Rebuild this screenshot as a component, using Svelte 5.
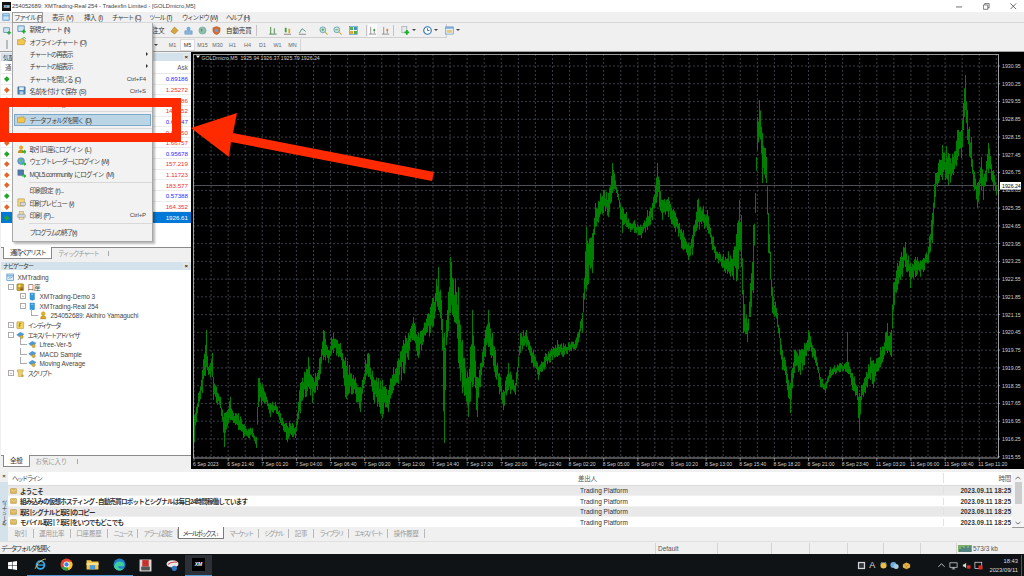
<script>
  // [x, high, low] read off the reference chart
  const keys = [
    [193,416,440],[194,415,442],[198,393,407],[202,370,393],[206,330,367],[208,367,375],[212,353,377],[213,377,400],[220,397,408],[224,413,447],[230,397,420],[233,413,423],[238,413,430],[243,425,438],[252,428,437],[256,437,448],[258,378,407],[265,393,403],[270,403,417],[275,402,410],[280,413,423],[286,423,440],[292,423,437],[295,427,438],[300,383,413],[308,357,387],[312,377,403],[317,373,390],[323,330,360],[328,350,363],[333,333,353],[340,343,357],[345,357,397],[353,375,393],[360,387,412],[365,360,380],[368,353,377],[373,377,400],[382,380,418],[388,390,412],[393,367,390],[403,340,373],[408,333,360],[413,317,340],[418,333,358],[430,307,333],[432,298,327],[438,267,310],[441,300,330],[444,333,443],[446,320,345],[450,257,313],[453,280,317],[458,287,363],[462,340,393],[468,377,417],[472,310,387],[477,377,417],[480,363,387],[488,310,347],[495,350,377],[503,390,410],[508,363,390],[515,383,395],[520,333,353],[526,330,347],[533,350,367],[538,367,380],[545,353,367],[557,340,357],[563,343,357],[575,340,350],[582,313,333],[586,227,290],[592,233,273],[595,203,227],[603,190,213],[608,193,217],[612,163,193],[617,190,197],[622,207,233],[626,212,227],[630,223,232],[634,220,233],[641,227,238],[647,210,230],[652,203,220],[657,163,197],[662,200,220],[668,197,217],[675,213,232],[683,230,250],[688,243,260],[692,235,255],[697,200,228],[707,210,230],[715,247,260],[725,257,273],[733,250,280],[737,223,280],[739,200,250],[741,215,267],[743,290,333],[747,323,342],[750,283,317],[753,225,293],[755,193,213],[757,117,150],[759,100,137],[762,133,183],[766,157,183],[768,213,253],[772,287,313],[777,313,327],[782,350,370],[785,360,375],[790,383,413],[794,350,373],[800,350,375],[808,330,350],[815,350,363],[820,377,387],[825,383,393],[830,367,378],[840,363,372],[846,362,372],[847,332,373],[848,362,374],[852,373,390],[857,387,400],[859,393,432],[861,385,400],[865,377,393],[870,357,380],[873,360,388],[880,347,367],[887,323,353],[891,330,357],[893,283,310],[897,263,290],[900,257,280],[905,242,267],[910,263,288],[915,257,277],[923,258,272],[928,247,263],[932,213,243],[935,173,197],[938,163,183],[942,145,180],[948,153,185],[953,157,175],[957,130,160],[961,130,158],[963,103,130],[965,75,110],[967,110,140],[971,137,167],[973,170,187],[977,183,208],[981,157,190],[983,177,200],[988,143,173],[993,170,190],[997,183,197]
  ];

  // small repeatable noise so the bars look like ticks, not a ribbon
  let seed = 7;
  const rnd = () => (seed = (seed * 16807) % 2147483647) / 2147483647;

  function barsPath() {
    let d = '';
    for (let i = 0; i < keys.length - 1; i++) {
      const [x0, h0, l0] = keys[i];
      const [x1, h1, l1] = keys[i + 1];
      for (let x = x0; x < x1; x += 1) {
        const t = (x - x0) / (x1 - x0);
        const mid = (h0 + (h1 - h0) * t + l0 + (l1 - l0) * t) / 2;
        const half = (l0 + (l1 - l0) * t - h0 - (h1 - h0) * t) / 2;
        const r = rnd();
        const len = x === x0 ? half : half * (0.5 + 0.5 * r * r);
        const off = x === x0 ? 0 : (rnd() - 0.5) * half * 0.7;
        d += `M${x + 0.5} ${(mid + off - len).toFixed(1)}V${(mid + off + Math.max(len, 1)).toFixed(1)}`;
      }
    }
    return d;
  }
  const bars = barsPath();

  const vGrid = Array.from({ length: 48 }, (_, i) => 194 + i * 17.07);
  const prices = Array.from({ length: 23 }, (_, i) => ({
    y: 66 + i * 17.76,
    label: (1930.95 - i * 0.7).toFixed(2)
  }));
  const times = ['6 Sep 2023','6 Sep 21:40','7 Sep 01:20','7 Sep 04:00','7 Sep 06:40','7 Sep 09:20','7 Sep 12:00','7 Sep 14:40','7 Sep 17:20','7 Sep 20:00','7 Sep 22:40','8 Sep 02:20','8 Sep 05:00','8 Sep 07:40','8 Sep 10:20','8 Sep 13:00','8 Sep 15:40','8 Sep 18:20','8 Sep 21:00','8 Sep 23:40','11 Sep 03:20','11 Sep 06:00','11 Sep 08:40','11 Sep 11:20'];

  // katakana-heavy labels were set much narrower in the original UI font
  const tight = (s) => (s.match(/[ァ-ヶー]/g) || []).length / s.length >= 0.33;

  const menus = ['ファイル (F)','表示 (V)','挿入 (I)','チャート (C)','ツール (T)','ウィンドウ (W)','ヘルプ (H)'];

  const fileMenu = [
    { label: '新規チャート (N)', icon: 'new' },
    { label: 'オフラインチャート (O)', icon: 'open' },
    { label: 'チャートの再表示', arrow: true },
    { label: 'チャートの組表示', arrow: true },
    { label: 'チャートを閉じる (C)', key: 'Ctrl+F4' },
    { label: '名前を付けて保存 (S)', key: 'Ctrl+S', icon: 'save' },
    { label: '画像で保存 (t)', icon: 'pic' },
    { sep: true },
    { label: 'データフォルダを開く (D)', icon: 'folder', active: true },
    { sep: true },
    { label: '口座開設 (A)', icon: 'pic' },
    { label: '取引口座にログイン (L)', icon: 'login' },
    { label: 'ウェブトレーダーにログイン (W)', icon: 'web' },
    { label: 'MQL5.community にログイン (M)', icon: 'mql' },
    { sep: true },
    { label: '印刷設定 (r)...' },
    { label: '印刷プレビュー (v)', icon: 'preview' },
    { label: '印刷 (P)...', key: 'Ctrl+P', icon: 'print' },
    { sep: true },
    { label: 'プログラムの終了(x)' }
  ];

  const quotes = [
    ['up','0.89186','b'],['down','1.25272','r'],['down','0.85286','r'],['down','147.452','r'],
    ['up','0.64047','b'],['down','0.85450','r'],['down','1.66757','r'],['up','0.95678','b'],
    ['down','157.219','r'],['down','1.11723','r'],['down','183.577','r'],['up','0.57388','b'],
    ['down','164.352','r'],['up','1926.61','s']
  ];

  const periods = ['M1','M5','M15','M30','H1','H4','D1','W1','MN'];

  const tree = [
    { label: 'XMTrading', level: 0, icon: 'root' },
    { label: '口座', level: 1, icon: 'acct', box: '-' },
    { label: 'XMTrading-Demo 3', level: 2, icon: 'srv', box: '+' },
    { label: 'XMTrading-Real 254', level: 2, icon: 'srv', box: '-' },
    { label: '254052689: Akihiro Yamaguchi', level: 3, icon: 'user' },
    { label: 'インディケータ', level: 1, icon: 'ind', box: '+' },
    { label: 'エキスパートアドバイザ', level: 1, icon: 'ea', box: '-' },
    { label: 'Lfree-Ver-5', level: 2, icon: 'ea' },
    { label: 'MACD Sample', level: 2, icon: 'ea' },
    { label: 'Moving Average', level: 2, icon: 'ea' },
    { label: 'スクリプト', level: 1, icon: 'script', box: '+' }
  ];

  const mails = ['ようこそ','組み込みの仮想ホスティング - 自動売買ロボットとシグナルは毎日24時間稼働しています','取引シグナルと取引のコピー','モバイル取引？取引をいつでもどこでも'];
  const termTabs = ['取引','運用比率','口座履歴','ニュース','アラーム設定','メールボックス','マーケット','シグナル','記事','ライブラリ','エキスパート','操作履歴'];
  const statusCells = [62, 54, 38, 38, 36, 37, 36];
</script>

{#snippet icon(kind)}
  <svg class="ico" viewBox="0 0 10 10">
    {#if kind === 'new'}
      <rect x="1" y="1" width="7" height="6" fill="#cfe3f3" stroke="#3f78a8" stroke-width="0.8"/>
      <path d="M7.5 5v4.5M5.2 7.2h4.5" stroke="#1fae2d" stroke-width="1.8"/>
    {:else if kind === 'open' || kind === 'folder'}
      <path d="M0.5 3h3l1-1h3v1.5h2l-1.5 5h-7.5z" fill="#f2c64f" stroke="#b08a2a" stroke-width="0.6"/>
      {#if kind === 'open'}<path d="M6 1.5l2.5-1 1 1.5" stroke="#35a535" fill="none" stroke-width="0.9"/>{/if}
    {:else if kind === 'save'}
      <rect x="1" y="1" width="8" height="8" fill="#4f86b8" stroke="#2c5c88" stroke-width="0.6"/>
      <rect x="2.5" y="1.4" width="5" height="3" fill="#e8f0f7"/>
      <rect x="3" y="6" width="4" height="3" fill="#bcd0e2"/>
    {:else if kind === 'pic'}
      <rect x="2" y="2" width="6" height="6" fill="#d8dde2" stroke="#8b949c" stroke-width="0.6"/>
    {:else if kind === 'login'}
      <circle cx="4.5" cy="2.8" r="2.2" fill="#e2a92c"/>
      <path d="M1 9c0-3 1.5-4 3.5-4s3.5 1 3.5 4z" fill="#c98f1f"/>
      <path d="M5.5 7.5h4M8 5.8l1.6 1.7L8 9.2" stroke="#1fae2d" stroke-width="1.2" fill="none"/>
    {:else if kind === 'web'}
      <circle cx="4.5" cy="4.5" r="3.8" fill="#5da6d8" stroke="#3a7aa8" stroke-width="0.5"/>
      <path d="M2 3l2-1 1 2-2 2z" fill="#6fbf4a"/>
      <path d="M5.5 7.8h4M8 6.2l1.6 1.6L8 9.4" stroke="#1fae2d" stroke-width="1.2" fill="none"/>
    {:else if kind === 'mql'}
      <rect x="1" y="1" width="6.5" height="6" fill="#4f7aa8" stroke="#345a80" stroke-width="0.5"/>
      <path d="M5.5 7.8h4M8 6.2l1.6 1.6L8 9.4" stroke="#1fae2d" stroke-width="1.2" fill="none"/>
    {:else if kind === 'preview'}
      <rect x="1" y="1" width="7" height="8" fill="#f3d77a" stroke="#a88a34" stroke-width="0.6"/>
      <rect x="4" y="5" width="5.5" height="3.5" fill="#d6d9dc" stroke="#7c858c" stroke-width="0.5"/>
    {:else if kind === 'print'}
      <rect x="3" y="0.8" width="4" height="3" fill="#f0dca0" stroke="#a08a50" stroke-width="0.5"/>
      <rect x="0.8" y="3.6" width="8.4" height="4" rx="0.8" fill="#cfd3d6" stroke="#7c858c" stroke-width="0.5"/>
      <rect x="2.4" y="7" width="5.2" height="2.2" fill="#f3e2ac" stroke="#a08a50" stroke-width="0.4"/>
    {:else if kind === 'root'}
      <rect x="1" y="1.2" width="8" height="7.6" fill="#dcebf7" stroke="#4a90c8" stroke-width="0.8"/>
      <path d="M1 3.4h8" stroke="#4a90c8"/>
      <path d="M3 7l1.5-2 1 1L7.5 4.5" stroke="#4a90c8" fill="none" stroke-width="0.7"/>
    {:else if kind === 'acct'}
      <rect x="1" y="1" width="8" height="8" rx="1" fill="#c9a227" stroke="#7a6a20" stroke-width="0.5"/>
      <circle cx="4" cy="3.6" r="1.4" fill="#efe08a"/>
      <path d="M5 6h3.4M5 7.6h3.4" stroke="#7a3c12" stroke-width="0.9"/>
    {:else if kind === 'srv'}
      <path d="M2.4 1.2h5.2v7.6l-2.6 1-2.6-1z" fill="#2f9be0" stroke="#1e74ad" stroke-width="0.5"/>
      <path d="M3.6 2.6h2.8" stroke="#bfe3fa" stroke-width="0.8"/>
    {:else if kind === 'user'}
      <circle cx="5" cy="3" r="2.2" fill="#e6b32e" stroke="#a47d18" stroke-width="0.4"/>
      <path d="M1.8 9.4c0-3 1.2-4.2 3.2-4.2s3.2 1.2 3.2 4.2z" fill="#d9a322" stroke="#a47d18" stroke-width="0.4"/>
    {:else if kind === 'ind'}
      <rect x="1" y="1" width="8" height="8" rx="0.8" fill="#f3d35c" stroke="#a68a2a" stroke-width="0.6"/>
      <path d="M4 7.5V2.8h2.4M4 5h1.8" stroke="#8a6a14" stroke-width="0.8" fill="none"/>
    {:else if kind === 'ea'}
      <path d="M0.8 4.4L5 1.6l4.2 1.8-2 3.2H3.4z" fill="#4f9bd8" stroke="#2d6c9e" stroke-width="0.4"/>
      <circle cx="6.6" cy="7" r="2" fill="#d9b23c" stroke="#8a7020" stroke-width="0.4"/>
    {:else if kind === 'script'}
      <path d="M1.5 1h7v2H7.4v5l1.2 1H2.8L2.4 3H1.5z" fill="#ecd06b" stroke="#a68a2a" stroke-width="0.5"/>
      <circle cx="7.6" cy="7.8" r="1.4" fill="#bfa54c"/>
    {/if}
  </svg>
{/snippet}

<div class="app">
  <div class="titlebar">
    <div class="logo">XM</div>
    <span>254052689: XMTrading-Real 254 - Tradexfin Limited - [GOLDmicro,M5]</span>
    <div class="winctl">
      <svg viewBox="0 0 8 8"><path d="M0 4.5h7" stroke="#333" stroke-width="0.8"/></svg>
      <svg viewBox="0 0 8 8"><path d="M2 2V0.5h5v5H5.5M0.5 2.2h5v5h-5z" stroke="#333" stroke-width="0.7" fill="none"/></svg>
      <svg viewBox="0 0 8 8"><path d="M0.5 0.5l6.5 6.5M7 0.5L0.5 7" stroke="#333" stroke-width="0.8"/></svg>
    </div>
  </div>

  <div class="menubar">
    <svg class="mdi" viewBox="0 0 10 10"><rect x="1" y="1" width="8" height="8" fill="#cfe3f3" stroke="#4a90c8"/><path d="M1 3.5h8" stroke="#4a90c8"/></svg>
    {#each menus as m, i}
      <div class="mitem" class:open={i === 0} class:k={tight(m)}>{m}</div>
    {/each}
  </div>

  <div class="toolbar">
    <svg class="tstart" viewBox="0 0 10 10"><rect x="1" y="1" width="7" height="6" fill="#cfe3f3" stroke="#3f78a8" stroke-width="0.8"/><path d="M7.5 5v4.5M5.2 7.2h4.5" stroke="#1fae2d" stroke-width="1.8"/></svg>
    <div class="tbox">
      <span class="ordertxt">注文</span>
      <svg class="ti gap1" viewBox="0 0 10 10"><path d="M1 6l4-5 4 4-4 4z" fill="#d9a63a" stroke="#8a6a1c" stroke-width="0.5"/></svg>
      <svg class="ti" viewBox="0 0 10 10"><circle cx="5" cy="3" r="2.2" fill="#6fb0e0"/><rect x="1" y="5.4" width="8" height="3.6" fill="#8ab8dc" stroke="#3f78a8" stroke-width="0.5"/></svg>
      <svg class="ti" viewBox="0 0 10 10"><circle cx="5" cy="5" r="4" fill="#8fc0a8" stroke="#5c8ca8" stroke-width="0.5"/><path d="M3 3l2 1-1 3z" fill="#4f7f9f"/></svg>
      <svg class="ti" viewBox="0 0 10 10"><path d="M5 0.5l4 1.5v3c0 2.4-2 4-4 4.6C3 9 1 7.4 1 5V2z" fill="#e0692c" stroke="#8a4a1c" stroke-width="0.4"/><circle cx="5" cy="5" r="2" fill="#5aa5dc"/></svg>
      <span class="autotxt">自動売買</span>
      <i class="vsep"></i>
      <svg class="ti t2" viewBox="0 0 10 10"><path d="M3 1v8M7 2.5v6M1.5 9h8" stroke="#2f7a2f" stroke-width="0.9"/></svg>
      <svg class="ti t2" viewBox="0 0 10 10"><rect x="2" y="2" width="2" height="5" fill="#3aa03a"/><rect x="6" y="3" width="2" height="5" fill="#d9a63a"/><path d="M1 9.2h8" stroke="#555" stroke-width="0.7"/></svg>
      <svg class="ti t2" viewBox="0 0 10 10"><path d="M1.5 8l3-5 4 3" stroke="#2f8a6a" stroke-width="0.9" fill="none"/><path d="M1 9.2h8" stroke="#555" stroke-width="0.7"/></svg>
      <svg class="ti t3 first" viewBox="0 0 10 10"><circle cx="4.2" cy="4.2" r="3.2" fill="#cfe6d8" stroke="#4a90a8" stroke-width="0.8"/><path d="M6.5 6.5l3 3" stroke="#d9a63a" stroke-width="1.2"/><path d="M2.6 4.2h3.2M4.2 2.6v3.2" stroke="#2f8a4a" stroke-width="0.7"/></svg>
      <svg class="ti t3" viewBox="0 0 10 10"><circle cx="4.2" cy="4.2" r="3.2" fill="#cfe6d8" stroke="#4a90a8" stroke-width="0.8"/><path d="M6.5 6.5l3 3" stroke="#d9a63a" stroke-width="1.2"/><path d="M2.6 4.2h3.2" stroke="#2f8a4a" stroke-width="0.7"/></svg>
      <svg class="ti t4" viewBox="0 0 10 10"><rect x="0.5" y="0.5" width="9" height="9" fill="#fff" stroke="#3f8ac0" stroke-width="0.7"/><rect x="1.2" y="1.2" width="3.4" height="3.2" fill="#4fa84f"/><rect x="5.4" y="1.2" width="3.4" height="3.2" fill="#3f8ac0"/><rect x="1.2" y="5.4" width="3.4" height="3.4" fill="#d9a63a"/><rect x="5.4" y="5.4" width="3.4" height="3.4" fill="#4fa84f"/></svg>
      <i class="vsep v5"></i>
      <div class="tact"><svg class="ti" viewBox="0 0 10 10"><path d="M3 1v8M7 3v5M1 9h8" stroke="#777" stroke-width="0.8"/><rect x="6" y="3.5" width="2" height="2" fill="#3aa03a"/></svg></div>
      <svg class="ti t5" viewBox="0 0 10 10"><path d="M3 1v8M7 3v5M1 9h8" stroke="#777" stroke-width="0.8"/><rect x="6" y="3.5" width="2" height="2" fill="#d9803a"/></svg>
      <i class="vsep v6"></i>
      <svg class="ti t6" viewBox="0 0 10 10"><rect x="1" y="0.5" width="5.5" height="7" fill="#e8eaec" stroke="#8b949c" stroke-width="0.6"/><path d="M6.5 4.5v5.2M3.9 7.1h5.2" stroke="#19b02c" stroke-width="2.1"/></svg>
      <i class="caret"></i>
      <svg class="ti t7" viewBox="0 0 10 10"><circle cx="5" cy="5" r="4.2" fill="#fff" stroke="#2f78b8" stroke-width="1.3"/><path d="M5 2.5V5h2.2" stroke="#24527a" stroke-width="0.9" fill="none"/></svg>
      <i class="caret"></i>
      <svg class="ti t7" viewBox="0 0 10 10"><rect x="0.5" y="1" width="9" height="8" fill="#e6eff7" stroke="#5a92c2" stroke-width="0.7"/><rect x="0.5" y="1" width="9" height="2" fill="#7aaad4"/><rect x="2" y="4.5" width="6" height="3" fill="#e6c77a"/></svg>
      <i class="caret"></i>
    </div>
  </div>

  <div class="toolbar2">
    <i class="grip"></i>
    <i class="caret c2"></i>
    <div class="periods">
      {#each periods as p}
        <span class:cur={p === 'M5'}>{p}</span>
      {/each}
    </div>
  </div>

  <div class="main">
    <div class="left">
      <section class="panel market">
        <header class="phead"><span>気配</span><b>×</b></header>
        <div class="mcols"><span>通</span><span>Ask</span></div>
        <div class="mrows">
          {#each quotes as q}
            <div class="mrow" class:sel={q[2] === 's'}>
              <i class="dia {q[0]}"></i>
              <em class={q[2]}>{q[1]}</em>
            </div>
          {/each}
        </div>
        <div class="ptabs">
          <span class="tab on k">通貨ペアリスト</span>
          <span class="tab k">ティックチャート</span>
          <i></i>
        </div>
      </section>

      <section class="panel nav">
        <header class="phead"><span class="k">ナビゲーター</span><b>×</b></header>
        <div class="tree">
          {#each tree as n}
            <div class="node lv{n.level}">
              {#if n.box}<i class="tbx">{n.box}</i>{:else if n.level > 1}<i class="tln"></i>{/if}
              {@render icon(n.icon)}
              <span class:k={tight(n.label)}>{n.label}</span>
            </div>
          {/each}
        </div>
        <div class="ptabs">
          <span class="tab on">全般</span>
          <span class="tab">お気に入り</span>
          <i></i>
        </div>
      </section>
    </div>

    <svg class="chart" viewBox="191 52 833 417">
      <rect x="191" y="52" width="833" height="417" fill="#000"/>
      {#each vGrid as x}
        <path d="M{x} 54V458" class="grid"/>
      {/each}
      {#each prices as p}
        <path d="M193 {p.y}H998" class="grid"/>
      {/each}
      <path d="M193 185.5H998" stroke="#4a4f55" stroke-width="1"/>
      <path d={bars} stroke="#008000" stroke-width="1" fill="none"/>
      <rect x="193.5" y="54.5" width="805" height="403.5" fill="none" stroke="#c4c4c4" stroke-width="0.8"/>
      <path d="M196 55.5h4l-2 2.4z" fill="#fff"/>
      <text x="201.5" y="60" class="hdr">GOLDmicro,M5  1925.94 1926.37 1925.79 1926.24</text>
      {#each prices as p}
        <path d="M998 {p.y}h2" stroke="#c4c4c4" stroke-width="0.6"/>
        <text x="1002" y={p.y + 1.9} class="ax">{p.label}</text>
      {/each}
      <rect x="1000" y="182" width="21" height="7.5" fill="#fff"/>
      <text x="1002" y="188" class="ax cur">1926.24</text>
      {#each times as t, i}
        <path d="M{194 + i * 34.14} 458v3" stroke="#c4c4c4" stroke-width="0.6"/>
        <text x={193 + i * 34.14} y="465.5" class="tm">{t}</text>
      {/each}
    </svg>
  </div>

  <div class="terminal">
    <div class="strip"><b>×</b><span>ターミナル</span></div>
    <div class="tmain">
      <div class="tablewrap">
        <div class="table">
          <div class="trow thead"><span class="k">ヘッドライン</span><span>差出人</span><span class="time">時間</span></div>
          {#each mails as m, i}
            <div class="trow" class:alt={i % 2 === 0}>
              <span class="subj">
                <svg class="mail" viewBox="0 0 10 8"><rect x="0.5" y="0.5" width="9" height="7" rx="1" fill="#dcb75c" stroke="#a88a3a" stroke-width="0.6"/><path d="M1 1.5l4 3 4-3" stroke="#f5e6b4" stroke-width="0.8" fill="none"/></svg>
                {m}
              </span>
              <span class="from">Trading Platform</span>
              <span class="time">2023.09.11 18:25</span>
            </div>
          {/each}
        </div>
        <div class="scroll">
          <svg viewBox="0 0 8 4"><path d="M1.5 3L4 1l2.5 2" stroke="#555" fill="none" stroke-width="0.8"/></svg>
          <i></i>
          <svg viewBox="0 0 8 4"><path d="M1.5 1L4 3l2.5-2" stroke="#555" fill="none" stroke-width="0.8"/></svg>
        </div>
      </div>
      <div class="ttabs">
        {#each termTabs as t}
          <span class="ttab" class:k={tight(t)} class:on={t === 'メールボックス'}>{t}{#if t === 'メールボックス'}<em>1</em>{/if}</span>
        {/each}
      </div>
    </div>
  </div>

  <div class="status">
    <span class="smsg">データフォルダを開く</span>
    {#each statusCells as w, i}
      <span class="scell" style="width:{w}px">{i === 0 ? 'Default' : ''}</span>
    {/each}
    <span class="scell last">
      <svg viewBox="0 0 14 7"><rect width="14" height="7" fill="#7fae6a"/><path d="M2 7V4M4 7V2M6 7V3M8 7V1M10 7V3M12 7V1" stroke="#2c5c9a" stroke-width="1"/></svg>
      573/3 kb
    </span>
  </div>

  <div class="taskbar">
    <svg class="win" viewBox="0 0 10 10"><path d="M0 1.4l4.4-.6v4H0zM5 .7L10 0v4.8H5zM0 5.3h4.4v4L0 8.7zM5 5.3h5V10l-5-.7z" fill="#fff"/></svg>
    <div class="tasks">
      <div class="task run"><svg viewBox="0 0 12 12"><circle cx="6" cy="6.5" r="3.6" fill="none" stroke="#35a8e6" stroke-width="1.7"/><path d="M2.6 6.5h6.8" stroke="#35a8e6" stroke-width="1.2"/><path d="M1 10C3 5 7 1 11 1" stroke="#f0c040" fill="none" stroke-width="0.8"/></svg></div>
      <div class="task run"><svg viewBox="0 0 12 12"><circle cx="6" cy="6" r="5.5" fill="#e0442f"/><path d="M6 6L1.4 9.2A5.5 5.5 0 0 0 8 11.1z" fill="#2fa24a"/><path d="M6 3.4h4.9A5.5 5.5 0 0 1 7.8 11.2z" fill="#f6c430"/><circle cx="6" cy="6" r="2.7" fill="#fff"/><circle cx="6" cy="6" r="2" fill="#3f82e6"/></svg></div>
      <div class="task run"><svg viewBox="0 0 12 12"><path d="M0.5 2h4l1 1.2h6v7.3H.5z" fill="#f3c74e"/><rect x="0.5" y="4.6" width="11" height="2" fill="#fbe08a"/><rect x="3.5" y="6.6" width="5" height="3.9" fill="#4a9ad6"/></svg></div>
      <div class="task run"><svg viewBox="0 0 12 12"><circle cx="6" cy="6" r="5.5" fill="#1f7fc8"/><path d="M1 7.5C2 3.4 6 2.2 9 4c1.6 1 1.8 3 .6 3.6H4.5C4.6 9.6 7 10.6 10 9.4 8.6 11.6 6 12 4 11.2 2.4 10.6 1.2 9.2 1 7.5z" fill="#3fcf9a"/></svg></div>
      <div class="task"><svg viewBox="0 0 12 12"><rect x="0.5" y="0.5" width="11" height="11" fill="#d8d8d8"/><rect x="3" y="1" width="6" height="6" fill="#c9302c"/><rect x="2" y="7" width="8" height="3.5" fill="#555"/></svg></div>
      <div class="task"><svg viewBox="0 0 12 12"><ellipse cx="6" cy="4.5" rx="5.5" ry="3.4" fill="#e8e8e8"/><path d="M2 5c2-2 5-2.6 8-2" stroke="#d03a3a" stroke-width="1.1" fill="none"/><circle cx="7.6" cy="8.6" r="2.4" fill="#2f78c0"/></svg></div>
      <div class="task cur"><span class="xm">XM</span></div>
    </div>
    <div class="tray">
      <svg viewBox="0 0 10 10"><rect x="1" y="1" width="8" height="8" fill="#d0d4d8"/><rect x="2.4" y="2.4" width="5.2" height="5.2" fill="#30343a"/></svg>
      <span class="ime">A</span>
      <svg viewBox="0 0 10 10"><circle cx="5" cy="5" r="3.4" fill="#e8c04a"/><path d="M2 3.6L3.4 1M8 3.6L6.6 1" stroke="#5a9ad8" stroke-width="1.2"/></svg>
      <svg viewBox="0 0 10 10"><circle cx="3.8" cy="4.4" r="3.4" fill="#6aaee0"/><circle cx="6.8" cy="6" r="2.8" fill="#a8c8e0"/></svg>
      <svg viewBox="0 0 10 10"><path d="M1 3.6l4-2 4 2v3.6l-4 2-4-2z" fill="#e8b448"/><path d="M1 3.6l4 2 4-2M5 5.6v3.6" stroke="#a87a20" stroke-width="0.5" fill="none"/></svg>
    </div>
    <div class="sys">
      <svg viewBox="0 0 10 10"><path d="M1.5 6.5L5 3l3.5 3.5" stroke="#ddd" fill="none" stroke-width="0.9"/></svg>
      <svg viewBox="0 0 10 10"><rect x="1" y="2" width="8" height="5" fill="none" stroke="#ddd" stroke-width="0.8"/><path d="M5 7v1.6M3 8.8h4" stroke="#ddd" stroke-width="0.8"/></svg>
      <svg viewBox="0 0 10 10"><path d="M1 4h1.4L4.6 2v6L2.4 6H1z" fill="#ddd"/><rect x="5.5" y="4.6" width="4" height="4" rx="1" fill="#e02b20"/></svg>
      <svg viewBox="0 0 10 10"><rect x="1" y="1.4" width="7.6" height="7" fill="none" stroke="#ddd" stroke-width="0.8"/><rect x="5" y="5" width="4.4" height="4.4" fill="#e02b20"/></svg>
    </div>
    <div class="clock"><span>18:43</span><span>2023/09/11</span></div>
    <i class="showdesk"></i>
  </div>

  <!-- file menu, opened over the left panel -->
  <div class="dropdown">
    {#each fileMenu as it}
      {#if it.sep}
        <div class="dsep"></div>
      {:else}
        <div class="ditem" class:hl={it.active}>
          <span class="dico">{#if it.icon}{@render icon(it.icon)}{/if}</span>
          <span class="dlabel" class:k={tight(it.label)}>{it.label}</span>
          {#if it.key}<span class="dkey">{it.key}</span>{/if}
          {#if it.arrow}<i class="darrow"></i>{/if}
        </div>
      {/if}
    {/each}
  </div>

  <!-- red annotation drawn on top of the screenshot -->
  <div class="redbox"></div>
  <svg class="redarrow" viewBox="0 0 1024 576">
    <polygon points="191,128 237,113 233,133 434,172 432,181 231,142 229,157" fill="#ff2a00"/>
  </svg>
</div>

<style>
  :global(body) { margin: 0; }

  .app {
    position: relative;
    width: 1024px;
    height: 576px;
    overflow: hidden;
    display: flex;
    flex-direction: column;
    background: #f0f0f0;
    font-family: "Liberation Sans", "Noto Sans CJK JP", sans-serif;
    font-size: 6.5px;
    color: #333;
  }

  .titlebar {
    height: 12px;
    flex: none;
    display: flex;
    align-items: center;
    background: #fff;
    color: #444;
    font-size: 5.8px;
  }
  .logo {
    width: 9px;
    height: 9px;
    margin: 0 1px 0 2px;
    background: #111;
    color: #fff;
    font-size: 4px;
    font-weight: bold;
    line-height: 9px;
    text-align: center;
  }
  .winctl {
    margin-left: auto;
    display: flex;
    gap: 20px;
    margin-right: 7px;
  }
  .winctl svg { width: 7px; height: 7px; }

  .menubar {
    height: 11px;
    flex: none;
    display: flex;
    align-items: center;
    padding-left: 2px;
    border-bottom: 1px solid #d8d8d8;
    box-sizing: border-box;
    color: #444;
  }
  .mdi { width: 8px; height: 8px; margin-right: 2px; }
  .mitem {
    padding: 0 5px;
    margin-right: 0;
    height: 11px;
    line-height: 11px;
    letter-spacing: -0.55px;
    word-spacing: 1px;
    width: 22px;
    white-space: nowrap;
  }
  .mitem.k { letter-spacing: -1.2px; }
  .mitem:nth-of-type(1) { width: 20px; padding: 0 3px; }
  .mitem:nth-of-type(2) { width: 22px; margin-left: 4px; }
  .mitem:nth-of-type(3) { width: 18px; margin-left: 0; }
  .mitem:nth-of-type(4) { width: 27px; }
  .mitem:nth-of-type(5) { width: 23px; }
  .mitem:nth-of-type(6) { width: 34px; }
  .mitem:nth-of-type(7) { width: 25px; }
  .mitem.open {
    width: 29px;
    padding: 0 0 0 2px;
    background: #f5f5f5;
    outline: 1px solid #9a9a9a;
    outline-offset: -1px;
    position: relative;
    z-index: 3;
  }

  .toolbar {
    height: 15px;
    flex: none;
    display: flex;
    align-items: center;
    justify-content: flex-start;
    padding-left: 3px;
    box-sizing: border-box;
  }
  .tstart { width: 8px; height: 8px; margin-right: 141px; flex: none; }
  .tbox {
    height: 14px;
    width: 295px;
    flex: none;
    display: flex;
    align-items: center;
    border-right: 1px solid #d0d0d0;
    border-bottom: 1px solid #d0d0d0;
    box-sizing: border-box;
  }
  .ordertxt { width: 12px; white-space: nowrap; letter-spacing: -0.3px; color: #333; }
  .ti { width: 9px; height: 9px; flex: none; margin-right: 5px; }
  .gap1 { margin-left: 6px; }
  .autotxt { width: 26px; white-space: nowrap; letter-spacing: -0.1px; color: #333; }
  .vsep { width: 1px; height: 11px; background: #c4c4c4; flex: none; margin: 0 11px 0 4px; }
  .t2 { margin-right: 6px; }
  .t3 { margin-right: 5px; }
  .t3.first { margin-left: 6px; }
  .t4 { margin-left: 2px; }
  .v5 { margin: 0 1px 0 3px; }
  .v6 { margin: 0 3px 0 1px; }
  .tact { width: 13px; height: 13px; background: #fbfbfb; display: flex; align-items: center; justify-content: center; margin-right: 2px; }
  .tact .ti { margin: 0; }
  .t5 { margin: 0 2px 0 2px; }
  .t6 { margin: 0 2px 0 4px; }
  .t7 { margin: 0 2px 0 7px; }
  .caret {
    width: 0;
    height: 0;
    border: 2px solid transparent;
    border-top: 2.5px solid #444;
    border-bottom: 0;
    flex: none;
  }

  .toolbar2 {
    height: 14px;
    flex: none;
    display: flex;
    align-items: center;
    padding-left: 6px;
    box-sizing: border-box;
    border-bottom: 1px solid #a0a0a0;
  }
  .grip { width: 2px; height: 9px; background: #b8bcc0; margin-right: 146px; flex: none; }
  .c2 { margin-right: 7px; }
  .periods {
    display: flex;
    height: 12px;
    align-items: center;
    border-right: 1px solid #d6d6d6;
    color: #666;
    font-size: 5.4px;
  }
  .periods span {
    width: 15px;
    height: 12px;
    line-height: 12px;
    text-align: center;
  }
  .periods .cur { background: #fbfbfb; outline: 1px solid #dcdcdc; outline-offset: -1px; color: #333; }

  .main {
    height: 417px;
    flex: none;
    display: flex;
  }
  .left {
    width: 191px;
    flex: none;
    display: flex;
    flex-direction: column;
  }
  .panel {
    height: 208.5px;
    display: flex;
    flex-direction: column;
    box-sizing: border-box;
    padding: 1px 0 1px 1px;
  }
  .phead {
    height: 8px;
    flex: none;
    display: flex;
    align-items: center;
    justify-content: space-between;
    background: #d4e2ec;
    padding: 0 2px;
    font-size: 6px;
    color: #333;
    letter-spacing: -0.3px;
  }
  .phead .k { letter-spacing: -1px; }
  .phead b { font-size: 6px; width: 6px; height: 6px; line-height: 6px; text-align: center; background: #e6e6e6; color: #222; }
  .mcols {
    height: 13px;
    flex: none;
    display: flex;
    justify-content: space-between;
    align-items: center;
    background: #fff;
    padding: 0 3px 0 4px;
    color: #555;
    font-size: 6.4px;
    border-bottom: 1px solid #e8e8e8;
    box-sizing: border-box;
  }
  .mrows { flex: 1; background: #fff; }
  .mrow {
    height: 10.65px;
    display: flex;
    align-items: center;
    padding: 0 3px 0 4px;
    border-bottom: 1px solid #ededed;
    box-sizing: border-box;
    color: #333;
  }
  .mrow em { margin-left: auto; font-style: normal; font-size: 6.2px; }
  .mrow.sel { background: #0078d7; color: #fff; border-bottom: 0; }
  .b { color: #2a2aff; }
  .r { color: #f03030; }
  .s { color: #fff; }
  .dia {
    width: 3.6px;
    height: 3.6px;
    transform: rotate(45deg);
    flex: none;
  }
  .dia.up { background: #22a52a; }
  .dia.down { background: #e2662a; }

  .ptabs {
    height: 13px;
    flex: none;
    display: flex;
    align-items: flex-start;
    background: #f0f0f0;
    padding-left: 2px;
    color: #999;
    border-top: 1px solid #8a8a8a;
    box-sizing: border-box;
  }
  .ptabs i { width: 1px; height: 5px; margin: 3px 0 0 4px; background: #aaa; }
  .tab { padding: 1px 6px 0; height: 10px; line-height: 9px; letter-spacing: -0.2px; white-space: nowrap; }
  .tab.k { letter-spacing: -1.45px; }
  .tab.on {
    background: #fff;
    color: #333;
    border: 1px solid #8a8a8a;
    border-top: 0;
    box-sizing: border-box;
    margin-top: -1px;
    height: 12px;
  }

  .tree { flex: 1; background: #fff; padding: 3px 0 0 5px; color: #444; }
  .node {
    height: 9.6px;
    display: flex;
    align-items: center;
    white-space: nowrap;
    position: relative;
    letter-spacing: -0.05px;
  }
  .node .ico { width: 8.5px; height: 8.5px; margin-right: 3px; flex: none; }
  .lv1 { padding-left: 10px; }
  .lv2 { padding-left: 22px; }
  .lv3 { padding-left: 33px; }
  .node .k { letter-spacing: -1.8px; }
  .tbx {
    position: absolute;
    width: 4px;
    height: 4px;
    margin-left: -8px;
    border: 0.6px solid #aaa;
    font-style: normal;
    font-size: 4px;
    line-height: 3.6px;
    text-align: center;
    color: #555;
  }
  .tln {
    position: absolute;
    width: 6px;
    height: 6px;
    margin: -6px 0 0 -8px;
    border-left: 0.6px solid #aaa;
    border-bottom: 0.6px solid #aaa;
  }

  .chart {
    width: 833px;
    height: 417px;
    flex: none;
    display: block;
  }
  .grid {
    stroke: #474d55;
    stroke-width: 0.8;
    stroke-dasharray: 2 2;
    fill: none;
  }
  .ax { font-size: 5.2px; fill: #cfcfcf; }
  .ax.cur { fill: #000; }
  .tm { font-size: 5px; fill: #cfcfcf; }
  .hdr { font-size: 5.2px; fill: #cfcfcf; white-space: pre; }

  .terminal {
    margin-top: 3px;
    height: 69px;
    flex: none;
    display: flex;
    background: #f0f0f0;
  }
  .strip {
    width: 8px;
    flex: none;
    background: #d4e2ec;
    display: flex;
    flex-direction: column;
    align-items: center;
    justify-content: space-between;
    color: #444;
  }
  .strip b { width: 8px; text-align: center; background: #efefef; font-size: 6px; height: 10px; line-height: 9px; }
  .strip span { writing-mode: vertical-rl; transform: rotate(180deg); font-size: 6px; margin-bottom: 15px; letter-spacing: -1px; }
  .tmain { flex: 1; display: flex; flex-direction: column; }
  .tablewrap { height: 56px; flex: none; display: flex; background: #fff; border-bottom: 1px solid #9a9a9a; box-sizing: border-box; }
  .table { flex: 1; }
  .trow {
    height: 10.6px;
    display: grid;
    grid-template-columns: 568px 367px 69px;
    align-items: center;
    font-weight: bold;
    color: #333;
    border-bottom: 1px solid #f0f0f0;
    box-sizing: border-box;
    white-space: nowrap;
  }
  .trow.alt { background: #e9e9e9; }
  .thead { height: 13.5px; font-weight: normal; color: #555; border-bottom: 1px solid #dcdcdc; letter-spacing: -0.3px; }
  .thead span:first-child { padding-left: 4px; }
  .thead .k { letter-spacing: -1.6px; }
  .thead span:nth-child(2) { padding-left: 2px; }
  .from { font-weight: normal; padding-left: 4px; }
  .subj { display: flex; align-items: center; letter-spacing: -0.75px; }
  .mail { width: 7px; height: 6px; margin: 0 3px 0 2px; flex: none; }
  .time { text-align: right; border-left: 1px solid #e2e2e2; padding-right: 1px; }
  .scroll { width: 12px; flex: none; display: flex; flex-direction: column; align-items: center; background: #f4f4f4; }
  .scroll svg { width: 8px; height: 8px; margin: 2px 0 0; }
  .scroll i { width: 7px; height: 22px; background: #cdcdcd; margin: 0 0 auto; }

  .ttabs {
    height: 13px;
    flex: none;
    display: flex;
    align-items: flex-start;
    padding-left: 1px;
    color: #999;
  }
  .ttab {
    padding: 1px 5.5px 0;
    border-right: 1px solid #b8b8b8;
    letter-spacing: -0.2px;
    white-space: nowrap;
    margin-top: 1px;
    height: 8px;
    line-height: 7px;
  }
  .ttab.k { letter-spacing: -1.9px; }
  .ttab.on {
    margin-top: -1px;
    padding: 1px 4px 0;
    height: 12px;
    line-height: 11px;
    background: #fff;
    color: #333;
    border: 1px solid #7a7a7a;
    border-top: 0;
    box-sizing: border-box;
    position: relative;
  }
  .ttab em { color: #e03030; font-size: 4px; font-style: normal; margin-left: 2px; letter-spacing: 0; }

  .status {
    height: 13px;
    margin-top: 0;
    flex: none;
    display: flex;
    align-items: center;
    background: #f0f0f0;
    border-top: 1px solid #e0e0e0;
    box-sizing: border-box;
  }
  .smsg { width: 655px; flex: none; padding-left: 1px; box-sizing: border-box; letter-spacing: -1.55px; }
  .scell {
    height: 11px;
    line-height: 11px;
    border-left: 1px solid #d4d4d4;
    box-sizing: border-box;
    padding-left: 2px;
    flex: none;
    color: #555;
  }
  .scell.last { display: flex; align-items: center; gap: 1px; padding-left: 1px; }
  .scell svg { width: 14px; height: 7px; }

  .taskbar {
    flex: 1;
    display: flex;
    align-items: center;
    background: #101316;
    color: #ddd;
  }
  .win { width: 9px; height: 9px; margin: 0 10px 0 8px; flex: none; }
  .tasks { display: flex; }
  .task {
    width: 26.4px;
    height: 21px;
    display: flex;
    align-items: center;
    justify-content: center;
    box-sizing: border-box;
  }
  .task svg { width: 13px; height: 13px; }
  .task.run { border-bottom: 1px solid #4f9bd8; }
  .task.cur { background: #2c3036; border-bottom: 1px solid #4f9bd8; }
  .xm {
    width: 13px;
    height: 13px;
    background: #000;
    color: #fff;
    font-size: 5px;
    font-weight: bold;
    font-style: italic;
    line-height: 13px;
    text-align: center;
  }
  .tray { display: flex; align-items: center; gap: 2.5px; margin-left: 645px; }
  .tray svg { width: 9px; height: 9px; }
  .ime { font-size: 9px; width: 8px; text-align: center; line-height: 9px; }
  .sys { display: flex; align-items: center; gap: 3.5px; margin-left: 26px; }
  .sys svg { width: 9px; height: 9px; }
  .clock {
    display: flex;
    flex-direction: column;
    align-items: flex-end;
    gap: 3px;
    margin-left: auto;
    margin-right: 3px;
    font-size: 5.8px;
    color: #ddd;
  }
  .showdesk { width: 1px; height: 21px; background: #555; margin-right: 2px; }

  /* overlays */
  .dropdown {
    position: absolute;
    left: 12px;
    top: 23px;
    width: 141px;
    padding-bottom: 3px;
    box-sizing: border-box;
    background: #f2f2f2;
    border: 1px solid #a8a8a8;
    border-top: 0;
    box-shadow: 2px 2px 2px rgba(0, 0, 0, 0.28);
    z-index: 2;
  }
  .ditem {
    height: 12.35px;
    display: flex;
    align-items: center;
    position: relative;
    color: #444;
  }
  .ditem.hl {
    background: #bcd5e6;
    outline: 1px solid #7aa8c8;
    outline-offset: -1px;
    margin: 0 1px;
  }
  .dico { width: 16px; flex: none; display: flex; justify-content: center; margin-right: 0; }
  .hl .dico { width: 15px; }
  .dico .ico { width: 9px; height: 9px; }
  .dlabel { letter-spacing: -0.6px; word-spacing: 1px; white-space: nowrap; margin-left: 0.5px; }
  .dlabel.k { letter-spacing: -1.15px; word-spacing: 1.5px; }
  .dkey { margin-left: auto; margin-right: 6px; letter-spacing: -0.1px; font-size: 6px; }
  .darrow {
    margin-left: auto;
    margin-right: 4px;
    width: 0;
    height: 0;
    border: 2px solid transparent;
    border-left: 2.5px solid #333;
    border-right: 0;
  }
  .dsep { height: 4.4px; display: flex; align-items: center; margin-left: 16px; }
  .dsep::after { content: ""; flex: 1; height: 1px; background: #d8d8d8; }

  .redbox {
    position: absolute;
    left: 0;
    top: 98px;
    width: 181px;
    height: 44px;
    box-sizing: border-box;
    border: 9px solid #ff2a00;
    z-index: 4;
  }
  .redarrow {
    position: absolute;
    left: 0;
    top: 0;
    width: 1024px;
    height: 576px;
    pointer-events: none;
    z-index: 4;
  }
</style>
